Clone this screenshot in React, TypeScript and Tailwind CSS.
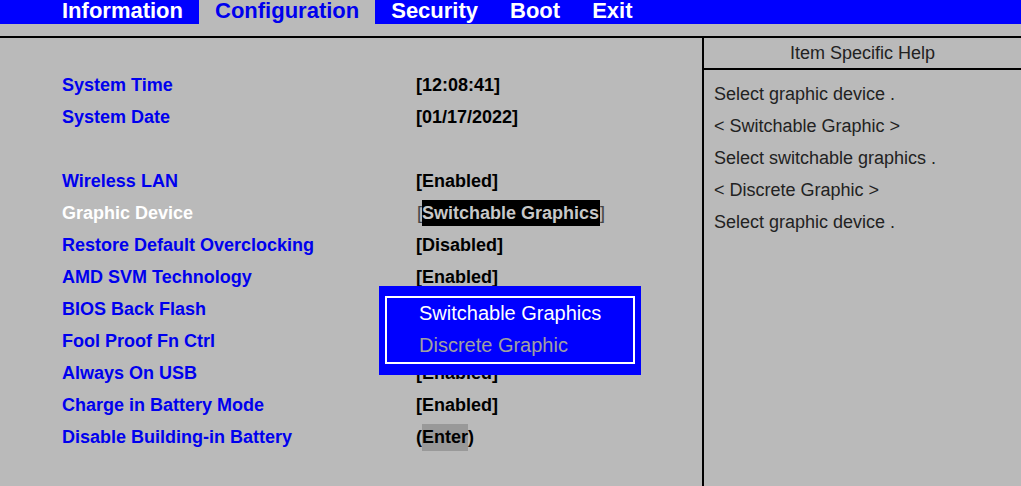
import React from "react";

const tabs = ["Information", "Configuration", "Security", "Boot", "Exit"];

type Row = { label: string; value?: React.ReactNode; active?: boolean } | null;

const rows: Row[] = [
  { label: "System Time", value: "[12:08:41]" },
  { label: "System Date", value: "[01/17/2022]" },
  null,
  { label: "Wireless LAN", value: "[Enabled]" },
  {
    label: "Graphic Device",
    active: true,
    value: (
      <>
        <span className="font-normal text-[#444] pl-px">[</span>
        <span className="inline-block bg-black text-[#c8c8c8] leading-[26px] pr-[1px]">
          Switchable Graphics
        </span>
        <span className="font-normal text-[#444]">]</span>
      </>
    ),
  },
  { label: "Restore Default Overclocking", value: "[Disabled]" },
  { label: "AMD SVM Technology", value: "[Enabled]" },
  { label: "BIOS Back Flash", value: "[Enabled]" },
  { label: "Fool Proof Fn Ctrl", value: "[Enabled]" },
  { label: "Always On USB", value: "[Enabled]" },
  { label: "Charge in Battery Mode", value: "[Enabled]" },
  {
    label: "Disable Building-in Battery",
    value: (
      <>
        (<span className="inline-block bg-[#999999] leading-[27px]">Enter</span>)
      </>
    ),
  },
];

const help = [
  "Select graphic device .",
  "< Switchable Graphic >",
  "Select switchable graphics .",
  "< Discrete Graphic >",
  "Select graphic device .",
];

export default function App() {
  return (
    <div
      className="relative w-[1021px] h-[486px] overflow-hidden bg-[#bababa]"
      style={{ fontFamily: '"Liberation Sans", Arial, sans-serif' }}
    >
      {/* Menu bar */}
      <div className="flex h-[24px] bg-[#0000ff] pl-[46px]">
        {tabs.map((t) => (
          <div
            key={t}
            className={
              t === "Configuration"
                ? "px-4 text-[22px] font-bold leading-[22px] bg-[#bababa] text-[#0000ee]"
                : "px-4 text-[22px] font-bold leading-[22px] text-white"
            }
          >
            {t}
          </div>
        ))}
      </div>

      <div className="mt-[12px] flex h-[450px] border-t-2 border-black">
        {/* Settings list */}
        <div className="w-[702px] pl-[62px] pt-[31px]">
          {rows.map((r, i) =>
            r ? (
              <div key={i} className="flex h-[32px] items-center text-[18px] font-bold">
                <div
                  className={
                    r.active ? "w-[354px] text-white" : "w-[354px] text-[#0000ee]"
                  }
                >
                  {r.label}
                </div>
                <div className="text-black">{r.value}</div>
              </div>
            ) : (
              <div key={i} className="h-[32px]" />
            )
          )}
        </div>

        {/* Help panel */}
        <div className="flex-1 border-l-2 border-black text-[18px] text-[#222]">
          <div className="h-[32px] border-b-2 border-black text-center leading-[30px]">
            Item Specific Help
          </div>
          <div className="pl-[10px] pt-[8px]">
            {help.map((h, i) => (
              <div key={i} className="leading-[32px]">
                {h}
              </div>
            ))}
          </div>
        </div>
      </div>

      {/* Option popup */}
      <div className="absolute left-[379px] top-[286px] w-[262px] bg-[#0000ff] px-[6px] pt-[10px] pb-[11px]">
        <div className="border-2 border-white pl-[32px] text-[20px]">
          <div className="-mt-px pb-px">
            <div className="leading-[32px] text-white">Switchable Graphics</div>
            <div className="leading-[32px] text-[#a0a0a0]">Discrete Graphic</div>
          </div>
        </div>
      </div>
    </div>
  );
}
